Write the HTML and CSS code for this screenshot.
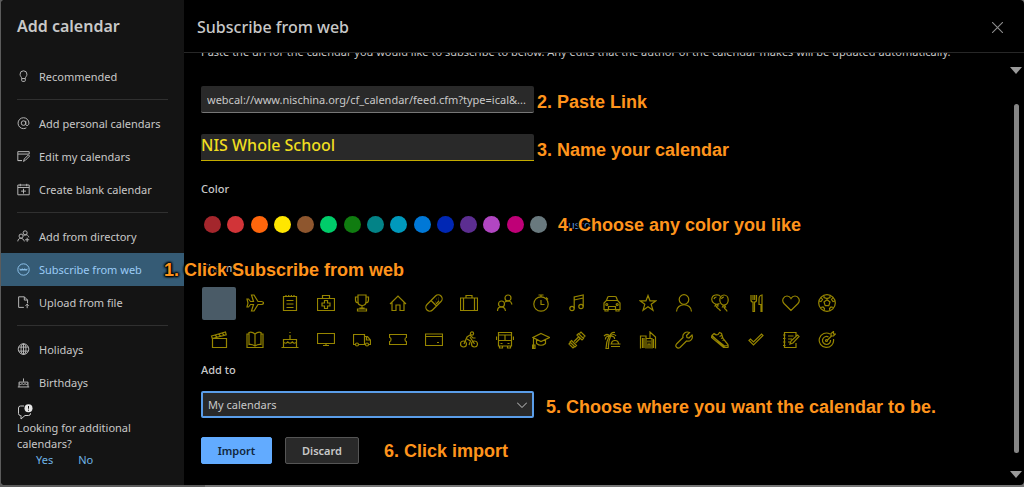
FILE: index.html
```html
<!DOCTYPE html>
<html lang="en">
<head>
<meta charset="utf-8">
<title>Add calendar</title>
<link rel="stylesheet" href="styles.css">
</head>
<body>
<div class="dialog">
  <aside class="sidebar">
    <h1 class="sidebar-title">Add calendar</h1>
    <nav class="nav">
      <a class="nav-item" href="#"><svg class="icon" viewBox="0 0 16 16"><path d="M5.8 10.5c0-1.8-2-2.8-2-5.3a4.2 4.2 0 0 1 8.4 0c0 2.500-2 3.500-2 5.300zM5.800 10.500v2.500q0 1 1 1h2.400q1 0 1-1v-2.500"/></svg>Recommended</a>
      <hr class="rule">
      <a class="nav-item" href="#"><svg class="icon" viewBox="0 0 16 16"><circle cx="8" cy="7.500" r="2.800"/><path d="M10.800 4.700v4.300c0 2.500 3.900 2 3.900-1.500A6.700 6.700 0 1 0 8 14.300q2 0 3.500-1"/></svg>Add personal calendars</a>
      <a class="nav-item" href="#"><svg class="icon" viewBox="0 0 16 16"><path d="M6 13H1V2h14v3M1 5h14M8 14l1-3 5-5 1.500 1.500-5 5zM1 13h5"/></svg>Edit my calendars</a>
      <a class="nav-item" href="#"><svg class="icon" viewBox="0 0 16 16"><path d="M1 2.500h14v12H1zM1 5.500h14M4 1v3M12 1v3M8 7v6M5 10h6"/></svg>Create blank calendar</a>
      <hr class="rule">
      <a class="nav-item" href="#"><svg class="icon" viewBox="0 0 16 16"><circle cx="10" cy="3.500" r="2.500"/><circle cx="5" cy="7.500" r="2.500"/><path d="M1 14c0-5 7-5 8 0M8 7c3-2 6-1 6.500 2M10 12h5M12.500 9.500v5"/></svg>Add from directory</a>
      <div class="nav-current">
        <a class="nav-item selected" href="#" aria-current="page"><svg class="icon" viewBox="0 0 16 16"><circle cx="8" cy="8" r="7"/><path d="M3.500 7l.8 2 .7-1.500.7 1.500.8-2M6.500 7l.8 2 .7-1.500.7 1.500.8-2M9.500 7l.8 2 .7-1.500.7 1.500.8-2"/></svg>Subscribe from web</a>
        <strong class="note note-web">1. Click Subscribe from web</strong>
      </div>
      <a class="nav-item" href="#"><svg class="icon" viewBox="0 0 16 16"><path d="M8.500 14H2V1h7l4 4v4M9 1v4h4M12.500 15v-5M10.500 12l2-2 2 2"/></svg>Upload from file</a>
      <hr class="rule">
      <a class="nav-item" href="#"><svg class="icon" viewBox="0 0 16 16"><circle cx="8" cy="7.500" r="6.500"/><ellipse cx="8" cy="7.500" rx="3" ry="6.500"/><path d="M2.500 5h11M2.500 10h11M8 1v13"/></svg>Holidays</a>
      <a class="nav-item" href="#"><svg class="icon" viewBox="0 0 16 16"><path d="M1 13.500h14M2.500 13.500V7.500h11v6M2.500 9.500q2 2 3.700 0 2 2 3.700 0 2 2 3.600 0M8 7V3"/></svg>Birthdays</a>
    </nav>
    <section class="feedback">
      <svg class="feedback-icon" viewBox="0 0 16 16"><path d="M7 2H3.500Q1.500 2 1.500 4v5.500q0 2 2 2H4V15l4-3.500h3.500q2 0 2-2V9"/><circle class="badge" cx="11.500" cy="4.200" r="4"/><path class="badge-mark" d="M11.500 2v2.700M11.500 5.700v1"/></svg>
      <p class="feedback-text">Looking for additional calendars?</p>
      <div class="feedback-links"><a href="#">Yes</a><a href="#">No</a></div>
    </section>
  </aside>

  <main class="main">
    <header class="main-header">
      <h2 class="main-title">Subscribe from web</h2>
      <button class="close" type="button" aria-label="Close"><svg viewBox="0 0 10 10"><path d="M0 0l10 10M10 0L0 10"/></svg></button>
    </header>
    <div class="scroll-area">
      <form class="form">
        <p class="intro">Paste the url for the calendar you would like to subscribe to below. Any edits that the author of the calendar makes will be updated automatically.</p>
        <div class="row row-url">
          <input class="field" type="text" aria-label="Calendar link" value="webcal://www.nischina.org/cf_calendar/feed.cfm?type=ical&amp;...">
          <strong class="note">2. Paste Link</strong>
        </div>
        <div class="row row-name">
          <input class="field field-name" type="text" aria-label="Calendar name" value="NIS Whole School">
          <strong class="note">3. Name your calendar</strong>
        </div>
        <h3 class="label">Color</h3>
        <div class="color-row">
          <div class="swatches">
            <button type="button" class="swatch c1" aria-label="Dark red"></button>
            <button type="button" class="swatch c2" aria-label="Red"></button>
            <button type="button" class="swatch c3" aria-label="Orange"></button>
            <button type="button" class="swatch c4" aria-label="Yellow"></button>
            <button type="button" class="swatch c5" aria-label="Brown"></button>
            <button type="button" class="swatch c6" aria-label="Light green"></button>
            <button type="button" class="swatch c7" aria-label="Green"></button>
            <button type="button" class="swatch c8" aria-label="Dark teal"></button>
            <button type="button" class="swatch c9" aria-label="Teal"></button>
            <button type="button" class="swatch c10" aria-label="Blue"></button>
            <button type="button" class="swatch c11" aria-label="Dark blue"></button>
            <button type="button" class="swatch c12" aria-label="Purple"></button>
            <button type="button" class="swatch c13" aria-label="Lavender"></button>
            <button type="button" class="swatch c14" aria-label="Magenta"></button>
            <button type="button" class="swatch c15" aria-label="Gray"></button>
          </div>
          <a class="custom" href="#">Custom</a>
          <strong class="note note-color">4. Choose any color you like</strong>
        </div>
        <h3 class="label label-charm">Charm</h3>
        <div class="charms">
          <button type="button" class="charm chosen" aria-label="No charm"></button>
          <button type="button" class="charm" aria-label="Plane"><svg viewBox="0 0 18 18"><path d="M1 5h1.500l2 2.500H7.500L5.500 1H8l4 6.500h3.500q2 .2 2 1.500t-2 1.500H12L8 17H5.500l2-6.500h-3L2.500 13H1l1-4z"/></svg></button>
          <button type="button" class="charm" aria-label="Notepad"><svg viewBox="0 0 18 18"><path d="M2.500 2.500h13v14h-13zM5 1v2M7.700 1v2M10.400 1v2M13 1v2M5.500 6.500h7M5.500 10h7M5.500 13.500h7"/></svg></button>
          <button type="button" class="charm" aria-label="First aid"><svg viewBox="0 0 18 18"><path d="M.5 4.500h17v12H.5zM5.500 4.500v-3h7v3M7.500 6.500h3v2.500h2.500v3h-2.500v2.500h-3V12H5V9h2.500z"/></svg></button>
          <button type="button" class="charm" aria-label="Trophy"><svg viewBox="0 0 18 18"><path d="M5 1h8v6.500q0 4-4 4t-4-4zM5 3H2.500v3q0 3 3 3M13 3h2.500v3q0 3-3 3M9 11.500V14M7 14h4v1H7zM4.500 17v-2h9v2z"/></svg></button>
          <button type="button" class="charm" aria-label="Home"><svg viewBox="0 0 18 18"><path d="M1 10l8-8 8 8M3 8v8.500h4V11h4v5.500h4V8"/></svg></button>
          <button type="button" class="charm" aria-label="Pill"><svg viewBox="0 0 18 18"><path d="M2 10.500L10.500 2a3.800 3.800 0 0 1 5.500 5.500L7.500 16A3.800 3.800 0 0 1 2 10.500zM6 6.500l5.500 5.500"/><path d="M11 5h.5M13 6h.5M10.500 8h.5M13 4h.5M11 10l3-3"/></svg></button>
          <button type="button" class="charm" aria-label="Suitcase"><svg viewBox="0 0 18 18"><path d="M.5 4h17v12.500H.5zM3.500 4v12.500M14.500 4v12.500M6 4V1.500h6V4"/></svg></button>
          <button type="button" class="charm" aria-label="People"><svg viewBox="0 0 18 18"><circle cx="12" cy="4" r="3"/><circle cx="5.500" cy="10" r="3"/><path d="M1.500 17c0-5 7-6 8 0M9 8c3-2 6-1.500 7 2.500"/></svg></button>
          <button type="button" class="charm" aria-label="Stopwatch"><svg viewBox="0 0 18 18"><circle cx="9" cy="10" r="7.200"/><path d="M6.500 1h5M9 1v2M9 6v4.500h3.500M14 3.500l2 2"/></svg></button>
          <button type="button" class="charm" aria-label="Music"><svg viewBox="0 0 18 18"><circle cx="4" cy="14.500" r="2.200"/><circle cx="13" cy="12.500" r="2.200"/><path d="M6.200 14.500V3l9-2v11.500M6.200 6l9-2"/></svg></button>
          <button type="button" class="charm" aria-label="Car"><svg viewBox="0 0 18 18"><path d="M1 9l2.500-2.500L4.800 3Q5 2.500 6 2.500h6q1 0 1.200.5l1.300 3.500L17 9v6.500H1zM3.500 6.500h11M2 15.500v1.500h3v-1.500M13 15.500v1.500h3v-1.500M5.500 15.500v-3h7v3"/><circle cx="3.800" cy="10.500" r="1"/><circle cx="14.200" cy="10.500" r="1"/></svg></button>
          <button type="button" class="charm" aria-label="Star"><svg viewBox="0 0 18 18"><path d="M9 1.500l2 5.300h6l-4.800 3.500 1.800 6L9 12.800l-5 3.500 1.800-6L1 6.800h6z"/></svg></button>
          <button type="button" class="charm" aria-label="Person"><svg viewBox="0 0 18 18"><circle cx="9" cy="5.500" r="4.800"/><path d="M1.500 17.500c0-9 15-9 15 0"/></svg></button>
          <button type="button" class="charm" aria-label="Balloons"><svg viewBox="0 0 18 18"><path d="M8.500 9.500C4 12 .5 7.500.8 5 1 .3 7.500-.2 9.500 2.500"/><ellipse cx="13" cy="6" rx="4.200" ry="5"/><path d="M12.500 11l-1 2h3l-1-2M14 13c-2 2 2 2 2 4.500M5 10l-1 2h3l-.5-2M5.500 12c-1 2 3 2 4 5M10.500 5q.5-2 2.500-2M3 5q.5-2 2.500-2"/></svg></button>
          <button type="button" class="charm" aria-label="Dining"><svg viewBox="0 0 18 18"><path d="M4 1v5q0 2 2 2v9.500h1.500V8q2 0 2-2V1M6 1v5M7.700 1v5M14 10.500h-2V5q0-3.500 3-4v16.500h-1z"/></svg></button>
          <button type="button" class="charm" aria-label="Heart"><svg viewBox="0 0 18 18"><path d="M9 16.500L2 9.500C-1 6 2 2 5 2q2.500 0 4 2.500Q10.500 2 13 2c3 0 6 4 3 7.500z"/></svg></button>
          <button type="button" class="charm" aria-label="Soccer"><svg viewBox="0 0 18 18"><circle cx="9" cy="9" r="8.300"/><path d="M9 5.800l3 2.200-1.200 3.700H7.200L6 8zM6 1.500v2l3 1 3-1v-2M1 7l2 .5 1.500-2L3 3.500M17 7l-2 .5-1.500-2L15 3.500M2.500 13.500l2.500-.5 1.500 1.500-.5 2.500M15.500 13.500L13 13l-1.500 1.500.5 2.500"/></svg></button>
          <button type="button" class="charm" aria-label="Movie"><svg viewBox="0 0 18 18"><path d="M2.500 7.500h14v9h-14zM1.500 5l14-4 .7 2.800L2.300 7.500zM5 4l2 2M8.500 3l2 2M12 2l2 2"/></svg></button>
          <button type="button" class="charm" aria-label="Book"><svg viewBox="0 0 18 18"><path d="M9 3Q6 .5 3 1.500v12q3-.5 6 1.500 3-2 6-1.500v-12Q12 .5 9 3v12M3 3H1v13.500h16V3h-2"/></svg></button>
          <button type="button" class="charm" aria-label="Cake"><svg viewBox="0 0 18 18"><path d="M.5 16.500h17M2.500 16.500v-8h13v8M2.500 11q2 2.500 4.300 0 2.300 2.500 4.500 0 2.200 2.500 4.200 0M9 8.500V4M9 1v1"/></svg></button>
          <button type="button" class="charm" aria-label="Monitor"><svg viewBox="0 0 18 18"><path d="M.5 2.500h17v10H.5zM9 12.500v2M6 14.500h6"/></svg></button>
          <button type="button" class="charm" aria-label="Truck"><svg viewBox="0 0 18 18"><path d="M2.500 13.500h-2V3.500h11v10H5.500M11.500 5.500h3l3 3.500v4.500h-2M13.500 6v3h4"/><circle cx="4" cy="13.500" r="1.500"/><circle cx="14" cy="13.500" r="1.500"/></svg></button>
          <button type="button" class="charm" aria-label="Ticket"><svg viewBox="0 0 18 18"><path d="M.5 3.500h17v3q-1.500 0-1.500 2t1.500 2v3H.5v-3q1.500 0 1.500-2t-1.500-2z"/></svg></button>
          <button type="button" class="charm" aria-label="Card"><svg viewBox="0 0 18 18"><path d="M.5 3h17v11.500H.5zM.5 5.500h17M12 11.500h2"/></svg></button>
          <button type="button" class="charm" aria-label="Cycling"><svg viewBox="0 0 18 18"><circle cx="3.500" cy="13" r="3"/><circle cx="14.500" cy="13" r="3"/><circle cx="12" cy="2.500" r="1.600"/><path d="M4 13L7 6l3-2 3 3h2.500M7 8l3.500 2L9 14M10 6l4.500 7"/></svg></button>
          <button type="button" class="charm" aria-label="Bus"><svg viewBox="0 0 18 18"><path d="M2.500 1.500h13V15h-13zM2.500 4h13M2.500 9.500h13M9 4v5.500M.5 5.500V9M17.500 5.500V9M3.500 15v2h3v-2M11.500 15v2h3v-2M4.500 12.500h2M11.500 12.500h2"/></svg></button>
          <button type="button" class="charm" aria-label="Graduation"><svg viewBox="0 0 18 18"><path d="M9 2.500l8.500 4L9 10.500l-8-4zM4.500 8.500v4q4.500 3.500 9 0v-4M1.500 7v10.500M.5 14h2.500v3.500H.5z"/></svg></button>
          <button type="button" class="charm" aria-label="Dumbbell"><svg viewBox="0 0 18 18"><path d="M6 10.500l4.500-4.500M7.500 12L12 7.500M9 4l5 5 1.500-1.500-5-5zM11.500 2.500L13 1l4 4-1.500 1.500M3.500 9.500l5 5L7 16l-5-5zM2.500 11.500L1 13l4 4 1.500-1.500"/></svg></button>
          <button type="button" class="charm" aria-label="Beach"><svg viewBox="0 0 18 18"><path d="M3 17.500Q3 11 6 5.500h1.500Q5 11 5.500 17.500zM7 5Q4 2 1 5M7 5Q2 5 2.500 8.500M7 5q1-4 5-3.500M7 5q4-3 6 0M7 5q5 0 4.500 3M8.500 13q0-3.500 3.500-3.500t3.500 3.500M7.500 13h10M8 15.500h9"/></svg></button>
          <button type="button" class="charm" aria-label="City"><svg viewBox="0 0 18 18"><path d="M1.500 17.500V5h5.500v12.500M7 17.500V7.500h6v10M11 7.500V1l5.500 5v11.500M3.500 7v10M5 7v10M9 17.500V13h2v4.500M9 9.500v2M11 9.500v2M14.500 8v9"/></svg></button>
          <button type="button" class="charm" aria-label="Wrench"><svg viewBox="0 0 18 18"><path d="M14.500 1.500l-3 3 .5 2 2 .5 3-3c1.500 4-2 7-5.500 6L5 16.500C2.500 18-.5 15.500 1.500 13L8 6.500c-1-4 3-6.500 6.500-5z"/></svg></button>
          <button type="button" class="charm" aria-label="Shoe"><svg viewBox="0 0 18 18"><path d="M1 4.500l2-2q2 2 4 1l1.500-2 2 1L12 7.500l4.500 5.500q1 1 .5 3.500h-3.500zM1 4.500l-.5 2 12 10H14M1.500 5.500l12 9.500 3-.5M8.500 5.500l2-1M10 7.500l2-1M11.500 9.500l2-1"/></svg></button>
          <button type="button" class="charm" aria-label="Check"><svg viewBox="0 0 18 18"><path d="M2 9.500L3.500 8l3 3L14.500 3 16 4.500 6.500 14z"/></svg></button>
          <button type="button" class="charm" aria-label="Notebook"><svg viewBox="0 0 18 18"><path d="M14 5V1.500H2.500v15H14V12M1 4h2.500M1 7.500h2.500M1 11h2.500M1 14.500h2.500M6 5h5.500M6 8h4M6 11h2M8 13l1-3 6.500-6L17 5.500 11 12z"/></svg></button>
          <button type="button" class="charm" aria-label="Target"><svg viewBox="0 0 18 18"><path d="M12 3A7.200 7.200 0 1 0 15.500 8M10.500 6A4 4 0 1 0 12.500 9M9 9.500l5-5M13 5V2.500L15.500.5v2.500h2L15.500 5z"/><circle cx="8.500" cy="9.500" r="1"/></svg></button>
        </div>
        <label class="label label-add" for="add-to">Add to</label>
        <div class="row row-select">
          <div class="select-wrap">
            <select class="select" id="add-to"><option>My calendars</option></select>
            <svg class="chevron" viewBox="0 0 10 6"><path d="M0 .5l5 5 5-5"/></svg>
          </div>
          <strong class="note">5. Choose where you want the calendar to be.</strong>
        </div>
        <div class="actions">
          <button class="btn primary" type="submit">Import</button>
          <button class="btn" type="button">Discard</button>
          <strong class="note">6. Click import</strong>
        </div>
      </form>
      <div class="scrollbar" aria-hidden="true">
        <span class="arrow"></span><span class="thumb"></span><span class="arrow"></span>
      </div>
    </div>
  </main>
</div>
</body>
</html>
```
FILE: styles.css
```css
* { box-sizing: border-box; }
html { height: 100%; background: #6f6f6f; }
body {
  margin: 0;
  min-height: 100%;
  padding: 0 0 2px 1px;
  display: flex;
  font-family: "Noto Sans", "Open Sans", sans-serif;
  font-size: 11px;
  line-height: 16px;
  color: #c8c8c8;
  background: linear-gradient(90deg, #5c5c5c 205px, #757575 205px);
}
button, input, select { font: inherit; color: inherit; margin: 0; }
button { cursor: pointer; }
h1, h2, h3, p { margin: 0; }
a { color: inherit; text-decoration: none; }
svg { display: block; fill: none; stroke: currentColor; stroke-width: 1; }

.dialog {
  flex: 1;
  display: grid;
  grid-template-columns: 183px minmax(0, 1fr);
  background: #000;
  border-radius: 4px;
}
.sidebar { background: #141414; border-radius: 4px 0 0 4px; }
.sidebar-title {
  height: 60px;
  padding: 14px 16px 0;
  font-size: 16px;
  line-height: 24px;
  font-weight: 600;
}
.nav-item {
  display: flex;
  align-items: center;
  gap: 9px;
  height: 33px;
  padding: 0 16px;
  white-space: nowrap;
}
.icon { width: 13px; height: 13px; color: #b8b8b8; stroke-width: 1.2; }
.rule { height: 1px; margin: 6px 16px 7px; border: 0; background: #303030; }
.nav-current { position: relative; }
.selected { background: #355b75; color: #9bcbf5; }
.selected .icon { color: #8fc4ee; }
.feedback { padding: 5px 16px 0; }
.feedback-icon { width: 16px; height: 16px; }
.badge { fill: #e6e6e6; stroke: none; }
.badge-mark { stroke: #141414; }
.feedback-text { width: 130px; }
.feedback-links { display: flex; gap: 25px; padding-left: 19px; color: #6fb3e6; }

.main { display: flex; flex-direction: column; min-width: 0; }
.main-header {
  display: flex;
  align-items: center;
  justify-content: space-between;
  height: 53px;
  padding: 2px 21px 0 13px;
  border-bottom: 1px solid #272727;
}
.main-title { font-size: 16px; line-height: 24px; font-weight: 500; }
.close { padding: 0; border: 0; background: none; color: #8c8c8c; }
.close svg { width: 11px; height: 11px; }
.scroll-area { flex: 1; display: flex; overflow: hidden; }
.form { flex: 1; min-width: 0; padding: 0 0 19px 17px; }
.intro { margin-top: -9px; white-space: nowrap; }

.note {
  font-family: "Liberation Sans", Arial, sans-serif;
  font-size: 18px;
  line-height: 20px;
  font-weight: 700;
  color: #ff941c;
  white-space: nowrap;
}
.note-web, .note-color {
  position: absolute;
  z-index: 1;
  text-shadow: 0 0 2px #000, 0 0 2px #000, 0 0 2px #000, 0 0 3px #000, 0 0 3px #000, 0 0 3px #000;
}
.note-web { left: 163px; top: 7px; }
.note-color { left: 357px; top: -1px; }

.row { display: flex; align-items: center; gap: 3px; }
.row-url { margin-top: 26px; }
.row-name { margin-top: 21px; }
.field {
  width: 333px;
  height: 27px;
  padding: 0 6px;
  border: 0;
  border-bottom: 1px solid #777;
  border-radius: 2px;
  background: #292929;
}
.row .note { padding-top: 4px; }
.field-name {
  padding: 0 0 4px;
  border-bottom-color: #c4ac00;
  border-radius: 2px 2px 0 0;
  font-size: 16px;
  font-weight: 500;
  color: #f0de20;
}
.label { display: block; font-size: 11px; line-height: 16px; font-weight: 500; margin-top: 20px; }
.color-row { position: relative; display: flex; align-items: center; gap: 14px; margin-top: 19px; padding-left: 3px; }
.swatches { display: flex; justify-content: space-between; width: 343px; }
.swatch { width: 17px; height: 17px; padding: 0; border: 0; border-radius: 50%; }
.custom { color: #5e9bdd; }
.c1 { background: #a4262c; }
.c2 { background: #d13438; }
.c3 { background: #ff660c; }
.c4 { background: #ffe600; }
.c5 { background: #8e562e; }
.c6 { background: #00cc6a; }
.c7 { background: #107c10; }
.c8 { background: #038387; }
.c9 { background: #0099bc; }
.c10 { background: #0078d7; }
.c11 { background: #0027b4; }
.c12 { background: #5c2e91; }
.c13 { background: #b146c2; }
.c14 { background: #bf0077; }
.c15 { background: #69797e; }
.label-charm { margin-top: 27px; }
.charms {
  display: grid;
  grid-template-columns: repeat(18, minmax(0, 1fr));
  width: 644px;
  margin-top: 9px;
}
.charm {
  display: flex;
  align-items: center;
  justify-content: center;
  height: 36px;
  padding: 0;
  border: 0;
  background: none;
  color: #968500;
}
.charm svg { width: 18px; height: 18px; stroke-width: 1.2; }
.chosen { background: #4a5b67; border-radius: 2px; margin: 2px 1px; height: 33px; }
.label-add { margin-top: 4px; }
.row-select { margin-top: 13px; gap: 12px; }
.select-wrap { position: relative; width: 333px; }
.select {
  display: block;
  width: 100%;
  height: 27px;
  padding: 0 5px;
  border: 2px solid #5a9de8;
  border-radius: 2px;
  background: #292929;
  appearance: none;
}
.chevron { position: absolute; right: 7px; top: 11px; width: 10px; height: 6px; pointer-events: none; }
.actions { display: flex; align-items: center; gap: 13px; margin-top: 19px; }
.btn {
  width: 74px;
  height: 27px;
  padding: 0;
  border: 1px solid #555;
  border-radius: 2px;
  background: #292929;
  font-weight: 600;
}
.primary { width: 71px; border-color: #62abff; background: #62abff; color: #10263c; }
.actions .note { padding-left: 12px; }

.scrollbar {
  width: 16px;
  display: flex;
  flex-direction: column;
  align-items: center;
  padding: 14px 0 7px;
}
.arrow { width: 12px; height: 7px; background: #9a9a9a; clip-path: polygon(0 0, 100% 0, 50% 100%); }
.thumb { flex: 1; width: 5px; margin: 30px 0 18px; border-radius: 3px; background: #858585; }
```
